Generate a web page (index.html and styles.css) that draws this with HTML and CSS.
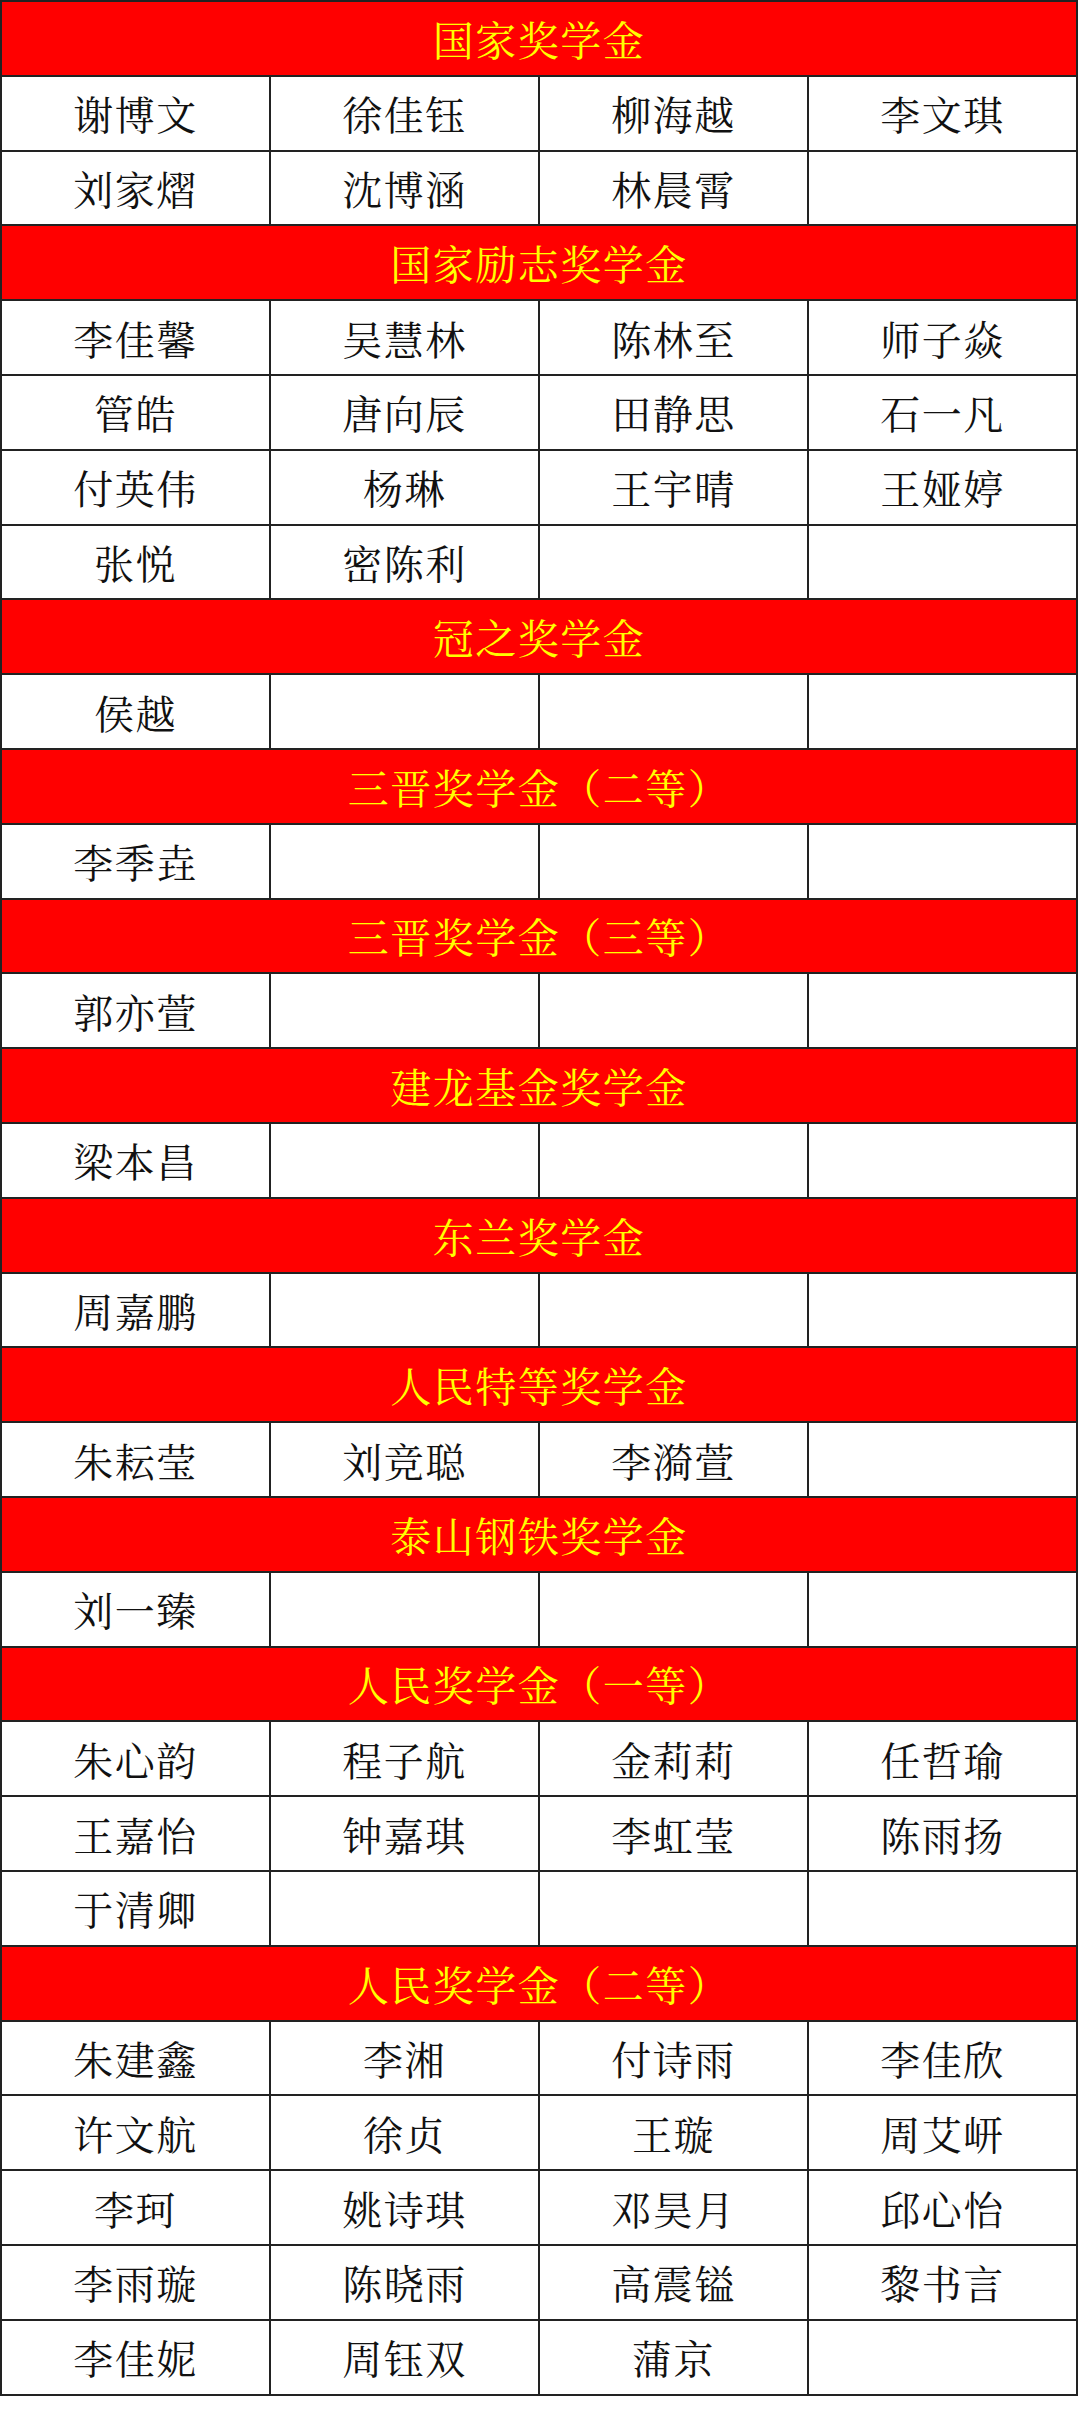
FILE: index.html
```html
<!DOCTYPE html>
<html lang="zh-CN">
<head>
<meta charset="utf-8">
<title>奖学金名单</title>
<link rel="stylesheet" href="styles.css">
</head>
<body>
<table class="list">
<colgroup><col class="c"><col class="c"><col class="c"><col class="c"></colgroup>
<tbody>
<tr class="head"><td colspan="4">国家奖学金</td></tr>
<tr><td>谢博文</td><td>徐佳钰</td><td>柳海越</td><td>李文琪</td></tr>
<tr><td>刘家熠</td><td>沈博涵</td><td>林晨霄</td><td></td></tr>
<tr class="head"><td colspan="4">国家励志奖学金</td></tr>
<tr><td>李佳馨</td><td>吴慧林</td><td>陈林至</td><td>师子焱</td></tr>
<tr><td>管皓</td><td>唐向辰</td><td>田静思</td><td>石一凡</td></tr>
<tr><td>付英伟</td><td>杨琳</td><td>王宇晴</td><td>王娅婷</td></tr>
<tr><td>张悦</td><td>密陈利</td><td></td><td></td></tr>
<tr class="head"><td colspan="4">冠之奖学金</td></tr>
<tr><td>侯越</td><td></td><td></td><td></td></tr>
<tr class="head"><td colspan="4">三晋奖学金（二等）</td></tr>
<tr><td>李季垚</td><td></td><td></td><td></td></tr>
<tr class="head"><td colspan="4">三晋奖学金（三等）</td></tr>
<tr><td>郭亦萱</td><td></td><td></td><td></td></tr>
<tr class="head"><td colspan="4">建龙基金奖学金</td></tr>
<tr><td>梁本昌</td><td></td><td></td><td></td></tr>
<tr class="head"><td colspan="4">东兰奖学金</td></tr>
<tr><td>周嘉鹏</td><td></td><td></td><td></td></tr>
<tr class="head"><td colspan="4">人民特等奖学金</td></tr>
<tr><td>朱耘莹</td><td>刘竞聪</td><td>李漪萱</td><td></td></tr>
<tr class="head"><td colspan="4">泰山钢铁奖学金</td></tr>
<tr><td>刘一臻</td><td></td><td></td><td></td></tr>
<tr class="head"><td colspan="4">人民奖学金（一等）</td></tr>
<tr><td>朱心韵</td><td>程子航</td><td>金莉莉</td><td>任哲瑜</td></tr>
<tr><td>王嘉怡</td><td>钟嘉琪</td><td>李虹莹</td><td>陈雨扬</td></tr>
<tr><td>于清卿</td><td></td><td></td><td></td></tr>
<tr class="head"><td colspan="4">人民奖学金（二等）</td></tr>
<tr><td>朱建鑫</td><td>李湘</td><td>付诗雨</td><td>李佳欣</td></tr>
<tr><td>许文航</td><td>徐贞</td><td>王璇</td><td>周艾岍</td></tr>
<tr><td>李珂</td><td>姚诗琪</td><td>邓昊月</td><td>邱心怡</td></tr>
<tr><td>李雨璇</td><td>陈晓雨</td><td>高震镒</td><td>黎书言</td></tr>
<tr><td>李佳妮</td><td>周钰双</td><td>蒲京</td><td></td></tr>
</tbody>
</table>
</body>
</html>
```
FILE: styles.css
```css
html, body {
  margin: 0;
  padding: 0;
  background: #ffffff;
}
body {
  font-family: "Noto Serif CJK SC", "Noto Sans CJK SC", serif;
  color: #111111;
}
.list {
  width: 1078px;
  border-collapse: collapse;
  table-layout: fixed;
  margin: 0;
}
.list .c {
  width: 25%;
}
.list tr {
  height: 74.8px;
}
.list td {
  border: 2px solid #222222;
  text-align: center;
  vertical-align: middle;
  padding: 0;
  font-size: 40px;
  font-weight: 400;
  line-height: 1;
  letter-spacing: 1.5px;
}
.list .head td {
  background: #ff0000;
  color: #ffff00;
  font-size: 41px;
  letter-spacing: 1.5px;
}
```
